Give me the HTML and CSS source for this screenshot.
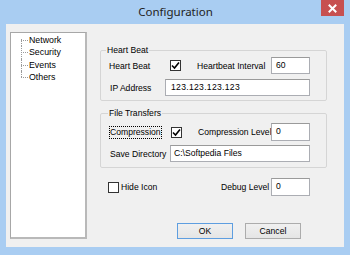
FILE: index.html
```html
<!DOCTYPE html>
<html lang="en">
<head>
    <meta charset="UTF-8">
    <meta name="viewport" content="width=device-width, initial-scale=1.0">
    <title>Configuration</title>
    <link rel="stylesheet" href="styles.css">
</head>
<body>
    <div class="window">
        <div class="titlebar">
            <span></span>
            <span class="title">Configuration</span>
            <span class="close">
                <svg width="9" height="9" viewBox="0 0 9 9">
                    <path d="M1.5 1.5 L7.5 7.5 M7.5 1.5 L1.5 7.5" stroke="#fff" stroke-width="2" stroke-linecap="square"/>
                </svg>
            </span>
        </div>

        <div class="client">
            <div class="tree">
                <ul>
                    <li>Network</li>
                    <li>Security</li>
                    <li>Events</li>
                    <li>Others</li>
                </ul>
            </div>

            <div class="main">
                <fieldset class="group">
                    <legend>Heart Beat</legend>
                    <div class="row">
                        <span class="label w61">Heart Beat</span>
                        <span class="check checked">
                            <svg width="9" height="9" viewBox="0 0 9 9"><path d="M1 4.5 L3.5 7 L8 1.5" fill="none" stroke="#000" stroke-width="1.6"/></svg>
                        </span>
                        <span class="label w74">Heartbeat Interval</span>
                        <span class="input small">60</span>
                    </div>
                    <div class="row gap5">
                        <span class="label w56 indent">IP Address</span>
                        <span class="input wide ip">123.123.123.123</span>
                    </div>
                </fieldset>

                <fieldset class="group second">
                    <legend>File Transfers</legend>
                    <div class="row">
                        <span class="label w62"><span class="focus">Compression</span></span>
                        <span class="check checked">
                            <svg width="9" height="9" viewBox="0 0 9 9"><path d="M1 4.5 L3.5 7 L8 1.5" fill="none" stroke="#000" stroke-width="1.6"/></svg>
                        </span>
                        <span class="label w73">Compression Level</span>
                        <span class="input small tall">0</span>
                    </div>
                    <div class="row gap4">
                        <span class="label w61 indent">Save Directory</span>
                        <span class="input wide">C:\Softpedia Files</span>
                    </div>
                </fieldset>

                <div class="row extra">
                    <span class="hide-icon">
                        <span class="check"></span>
                        <span>Hide Icon</span>
                    </span>
                    <span class="label w50">Debug Level</span>
                    <span class="input small tall">0</span>
                </div>

                <div class="buttons">
                    <span class="btn btn-default">OK</span>
                    <span class="btn">Cancel</span>
                </div>
            </div>
        </div>
    </div>
</body>
</html>
```

FILE: styles.css
```css
* {
    margin: 0;
    padding: 0;
    box-sizing: border-box;
}

body {
    background-color: #a9cdf2;
    font-family: 'Liberation Sans', Arial, sans-serif;
    font-size: 8.6px;
    color: #000;
}

.window {
    width: 350px;
    height: 255px;
    background-color: #a9cdf2;
    display: flex;
    flex-direction: column;
}

/* Barra de título */
.titlebar {
    height: 24px;
    display: grid;
    grid-template-columns: 1fr auto 1fr;
    align-items: start;
}

.title {
    font-family: 'Noto Sans', 'Open Sans', sans-serif;
    font-size: 11.5px;
    line-height: 24px;
    color: #222;
    padding-left: 1px;
}

.close {
    justify-self: end;
    margin-right: 6px;
    width: 23px;
    height: 16px;
    background-color: #c75050;
    display: flex;
    align-items: center;
    justify-content: center;
}

/* Área do cliente */
.client {
    margin: 0 6px 8px 6px;
    height: 223px;
    background-color: #f0f0f0;
    display: flex;
}

.tree {
    margin: 8px 0 0 4px;
    width: 77px;
    height: 207px;
    background-color: #fff;
    border: 1px solid #a7a7a7;
    border-right: 2px solid #b9b9b9;
    border-bottom: 2px solid #b9b9b9;
    padding: 1px 0 0 10px;
}

.tree ul {
    list-style: none;
}

.tree li {
    position: relative;
    line-height: 12.3px;
    padding-left: 8px;
    font-size: 8.8px;
}

.tree li::before {
    content: '';
    position: absolute;
    left: 0;
    top: 6px;
    width: 7px;
    border-top: 1px dotted #9a9a9a;
}

.tree li::after {
    content: '';
    position: absolute;
    left: 0;
    top: 0;
    bottom: 0;
    border-left: 1px dotted #9a9a9a;
}

.tree li:first-child::after {
    top: 5px;
}

.tree li:last-child::after {
    bottom: 6px;
}

.main {
    margin-left: 13px;
    width: 227px;
    padding-top: 20px;
}

/* Grupos */
.group {
    width: 227px;
    border: 1px solid #d5d5d5;
    border-radius: 2px;
    padding: 1px 16px 4px 8px;
}

.group legend {
    line-height: 12px;
    padding: 0 1px;
    margin-left: -3px;
}

.group.second {
    margin-top: 6px;
    padding-top: 4px;
    padding-bottom: 5px;
}

.group.second legend {
    margin-left: -1px;
}

.row {
    display: flex;
    align-items: center;
}

.gap5 {
    margin-top: 5px;
}

.gap4 {
    margin-top: 4px;
}

.label {
    white-space: nowrap;
    flex-shrink: 0;
}

.indent {
    padding-left: 1px;
}

.w50 { width: 50px; }
.w56 { width: 56px; }
.w61 { width: 61px; }
.w62 { width: 62px; }
.w73 { width: 73px; }
.w74 { width: 74px; }

.focus {
    outline: 1px dotted #000;
    padding: 0 0 1px 0;
    margin-left: 1px;
}

.check {
    width: 11px;
    height: 11px;
    margin-right: 16px;
    border: 1px solid #333;
    background-color: #fff;
    display: inline-flex;
    align-items: center;
    justify-content: center;
    flex-shrink: 0;
}

.input {
    height: 17px;
    background-color: #fff;
    border: 1px solid #abadb3;
    border-top-color: #9a9a9a;
    padding: 1px 0 0 4px;
    line-height: 12px;
    white-space: nowrap;
}

.input.small {
    width: 39px;
    flex-shrink: 0;
}

.input.tall {
    height: 18px;
}

.input.wide {
    flex: 1;
    padding-left: 3px;
}

.input.ip {
    padding-left: 5px;
    letter-spacing: 0.3px;
}

/* Linha inferior */
.extra {
    margin-top: 10px;
}

.hide-icon {
    width: 121px;
    padding-left: 8px;
    display: flex;
    align-items: center;
    flex-shrink: 0;
}

.hide-icon .check {
    margin-right: 2px;
}

.buttons {
    margin-top: 27px;
    display: flex;
    justify-content: flex-end;
    gap: 12px;
    padding-right: 26px;
}

.btn {
    width: 56px;
    height: 16px;
    border: 1px solid #acacac;
    background: linear-gradient(#f0f0f0, #e5e5e5);
    display: flex;
    align-items: center;
    justify-content: center;
}

.btn-default {
    border-color: #5e9ee0;
}
```
